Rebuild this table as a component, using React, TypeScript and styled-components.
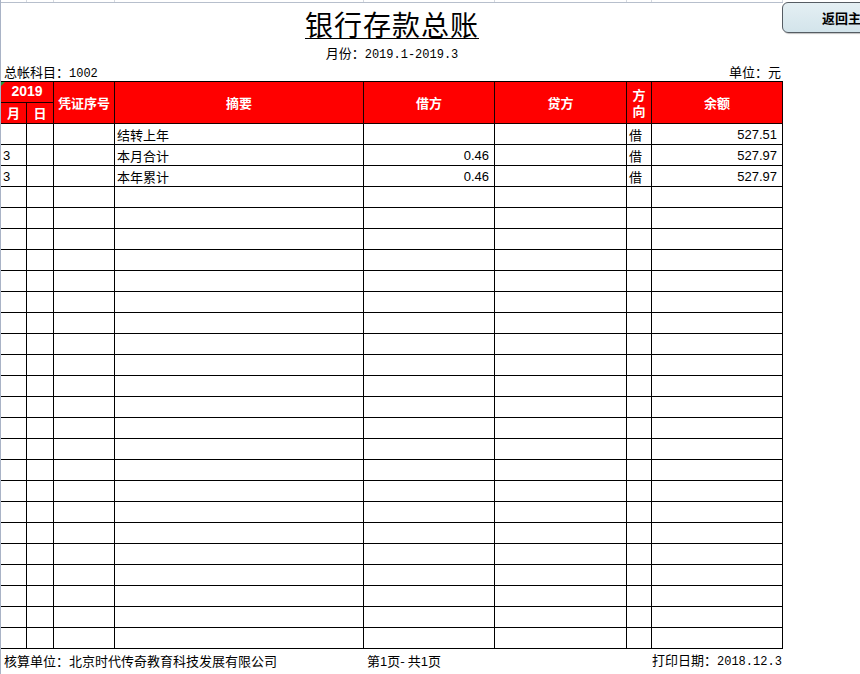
import React from "react";
import styled, { createGlobalStyle } from "styled-components";

const Global = createGlobalStyle`
  html, body { margin: 0; padding: 0; background: #ffffff; overflow: hidden; }
  body { width: 860px; height: 674px; font-family: "Noto Sans CJK SC", "Liberation Sans", sans-serif; color: #000; }
`;

const COLS = "26px 27px 61px 249px 131px 132px 25px 131px";

const Page = styled.div`
  position: relative;
  width: 860px;
  height: 674px;
  overflow: hidden;
`;

const Sheet = styled.div`
  width: 782px;
  height: 674px;
  border-left: 1px solid #a9b3c6;
  display: flex;
  flex-direction: column;
`;

const Strip = styled.div`
  display: grid;
  grid-template-columns: ${COLS};
  height: 3px;
  border-bottom: 1px solid #b7bfcc;
  box-sizing: border-box;
`;

const StripCell = styled.div`
  border-right: 1px solid #d5d9e0;
`;

const Title = styled.div`
  margin-top: 5px;
  height: 33px;
  text-align: center;
  font-family: "Noto Sans CJK SC", sans-serif;
  font-size: 28px;
  line-height: 33px;
  font-weight: 400;
  letter-spacing: 1px;
  span {
    text-decoration: underline;
    text-decoration-thickness: 1px;
    text-underline-offset: 2px;
  }
`;

const Month = styled.div`
  margin-top: 4px;
  height: 16px;
  text-align: center;
  font-size: 13px;
  line-height: 16px;
`;

const Mono = styled.span`
  font-family: "Liberation Mono", monospace;
  font-size: 12px;
`;

const Meta = styled.div`
  margin-top: 3px;
  height: 17px;
  display: flex;
  justify-content: space-between;
  align-items: baseline;
  padding: 0 2px 0 3px;
  font-size: 13px;
  line-height: 15px;
`;

const MetaText = styled.span`
  line-height: 16px;
`;

const Grid = styled.div`
  display: grid;
  grid-template-columns: ${COLS};
  grid-auto-rows: 21px;
  border-top: 1px solid #000;
`;

const Head = styled.div<{ $col: string; $row: string }>`
  grid-column: ${(p) => p.$col};
  grid-row: ${(p) => p.$row};
  background: #ff0000;
  color: #ffffff;
  border-right: 1px solid #1a0000;
  border-bottom: 1px solid #1a0000;
  display: flex;
  flex-direction: column;
  align-items: center;
  justify-content: center;
  gap: 1px;
  text-align: center;
  font-size: 13px;
  font-weight: 700;
  line-height: 15px;
  position: relative;
`;

const Corner = styled.div`
  position: absolute;
  left: 0;
  top: 0;
  width: 0;
  height: 0;
  border-top: 4px solid #1f9d3a;
  border-right: 4px solid transparent;
`;

const Num = styled.span`
  font-family: "Liberation Sans", Arial, sans-serif;
  font-size: 14px;
  font-weight: 700;
`;

const Cell = styled.div<{ $align?: "left" | "right" | "center" }>`
  border-right: 1px solid #000;
  border-bottom: 1px solid #000;
  display: flex;
  align-items: flex-end;
  justify-content: ${(p) =>
    p.$align === "right" ? "flex-end" : p.$align === "center" ? "center" : "flex-start"};
  padding: 0 5px 1px 2px;
  font-size: 13px;
  line-height: 16px;
  white-space: nowrap;
  overflow: hidden;
  position: relative;
`;

const Amount = styled.span`
  font-family: "Liberation Sans", Arial, sans-serif;
  font-size: 13px;
`;

const Marker = styled.div`
  position: absolute;
  left: -1px;
  top: 0;
  width: 1px;
  height: 21px;
  background: #2aa34a;
`;

const Footer = styled.div`
  display: grid;
  grid-template-columns: ${COLS};
  height: 26px;
  align-items: center;
  font-size: 13px;
  line-height: 16px;
`;

const FootLeft = styled.div`
  grid-column: 1 / 5;
  padding-left: 3px;
  white-space: nowrap;
`;

const FootMid = styled.div`
  grid-column: 5 / 7;
  padding-left: 3px;
  white-space: nowrap;
`;

const FootRight = styled.div`
  grid-column: 8 / 9;
  text-align: right;
  padding-right: 2px;
  white-space: nowrap;
`;

const BackButton = styled.button`
  position: absolute;
  left: 782px;
  top: 2px;
  width: 132px;
  height: 31px;
  border: 1px solid #555c63;
  border-radius: 6px;
  background: linear-gradient(#e4eff3, #d3e4eb);
  box-shadow: 1px 1px 1px rgba(0, 0, 0, 0.25);
  font-family: "Noto Sans CJK SC", sans-serif;
  font-size: 13px;
  font-weight: 700;
  color: #000;
  padding: 0;
  text-align: center;
  line-height: 29px;
  cursor: pointer;
`;

type Row = { m?: string; d?: string; v?: string; s?: string; debit?: string; credit?: string; dir?: string; bal?: string };

const rows: Row[] = [
  { s: "结转上年", dir: "借", bal: "527.51" },
  { m: "3", s: "本月合计", debit: "0.46", dir: "借", bal: "527.97" },
  { m: "3", s: "本年累计", debit: "0.46", dir: "借", bal: "527.97" },
];
while (rows.length < 25) rows.push({});

export default function App() {
  return (
    <Page>
      <Global />
      <Sheet>
        <Strip>
          {Array.from({ length: 8 }).map((_, i) => (
            <StripCell key={i} />
          ))}
        </Strip>
        <Title>
          <span>银行存款总账</span>
        </Title>
        <Month>
          月份：<Mono>2019.1-2019.3</Mono>
        </Month>
        <Meta>
          <MetaText>
            总帐科目：<Mono>1002</Mono>
          </MetaText>
          <MetaText>单位：元</MetaText>
        </Meta>
        <Grid>
          <Head $col="1 / 3" $row="1">
            <Corner />
            <Num>2019</Num>
          </Head>
          <Head $col="1" $row="2">月</Head>
          <Head $col="2" $row="2">日</Head>
          <Head $col="3" $row="1 / 3">凭证序号</Head>
          <Head $col="4" $row="1 / 3">摘要</Head>
          <Head $col="5" $row="1 / 3">借方</Head>
          <Head $col="6" $row="1 / 3">贷方</Head>
          <Head $col="7" $row="1 / 3">
            <span>方</span>
            <span>向</span>
          </Head>
          <Head $col="8" $row="1 / 3">余额</Head>
          {rows.map((r, i) => (
            <React.Fragment key={i}>
              <Cell>
                {i === 6 && <Marker />}
                {r.m && <Amount>{r.m}</Amount>}
              </Cell>
              <Cell>{r.d}</Cell>
              <Cell>{r.v}</Cell>
              <Cell>{r.s}</Cell>
              <Cell $align="right">{r.debit && <Amount>{r.debit}</Amount>}</Cell>
              <Cell $align="right">{r.credit && <Amount>{r.credit}</Amount>}</Cell>
              <Cell>{r.dir}</Cell>
              <Cell $align="right">{r.bal && <Amount>{r.bal}</Amount>}</Cell>
            </React.Fragment>
          ))}
        </Grid>
        <Footer>
          <FootLeft>核算单位：北京时代传奇教育科技发展有限公司</FootLeft>
          <FootMid>
            第<Amount>1</Amount>页- 共<Amount>1</Amount>页
          </FootMid>
          <FootRight>
            打印日期：<Mono>2018.12.3</Mono>
          </FootRight>
        </Footer>
      </Sheet>
      <BackButton>返回主页</BackButton>
    </Page>
  );
}
